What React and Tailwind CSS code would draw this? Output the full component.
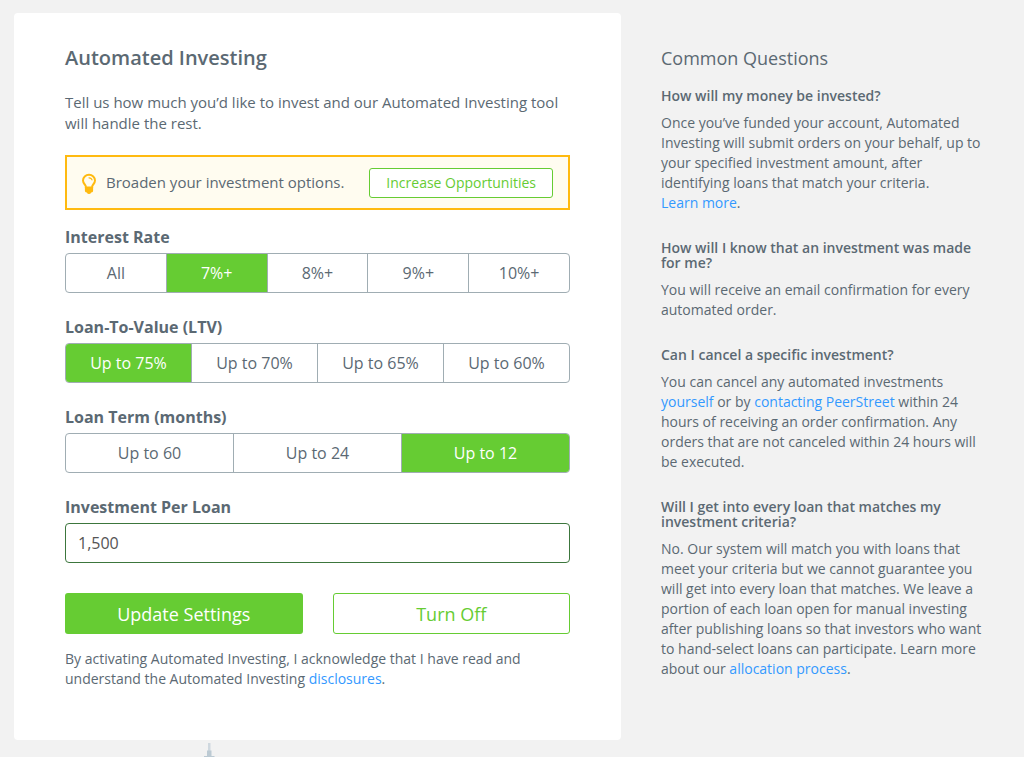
import { useState } from "react";

const CHOICES = [
  { name: "rate", label: "Interest Rate", options: ["All", "7%+", "8%+", "9%+", "10%+"], initial: "7%+" },
  { name: "ltv", label: "Loan-To-Value (LTV)", options: ["Up to 75%", "Up to 70%", "Up to 65%", "Up to 60%"], initial: "Up to 75%" },
  { name: "term", label: "Loan Term (months)", options: ["Up to 60", "Up to 24", "Up to 12"], initial: "Up to 12" },
];

function BulbIcon() {
  return (
    <svg className="h-[22px] w-4 shrink-0" viewBox="0 0 16 22" fill="none" aria-hidden="true">
      <path
        d="M4.800 15.500V14.400C4.800 12.800 2 11.800 2 8.600a6 5.800 0 0 1 12 0c0 3.200-2.800 4.200-2.800 5.800v1.100z"
        stroke="#ffba10"
        strokeWidth="2"
        strokeLinejoin="round"
      />
      <path d="M8 5.800c1.600 0 2.700.8 3 2.100" stroke="#ffba10" strokeWidth="1.200" strokeLinecap="round" />
      <path d="M3.900 15.200h8.200v3.600a1.600 1.600 0 0 1-1.600 1.600h-.4a2.200 2.200 0 0 1-4.200 0h-.4a1.600 1.600 0 0 1-1.600-1.600z" fill="#ffba10" />
    </svg>
  );
}

function SegmentedChoice({ name, label, options, initial }) {
  const [value, setValue] = useState(initial);
  return (
    <fieldset className="mb-6 min-w-0">
      <legend className="mb-1.5 text-base leading-5 font-bold">{label}</legend>
      <div className="flex h-10 divide-x divide-[#a0adb3] overflow-hidden rounded border border-[#a0adb3] bg-white">
        {options.map((option) => (
          <label
            key={option}
            className="relative flex flex-1 cursor-pointer items-center justify-center text-base has-checked:bg-[#66cc33] has-checked:text-white"
          >
            <input
              type="radio"
              name={name}
              value={option}
              checked={value === option}
              onChange={() => setValue(option)}
              className="sr-only"
            />
            {option}
          </label>
        ))}
      </div>
    </fieldset>
  );
}

function TextLink({ children }) {
  return (
    <a href="#" className="text-[#3399ff] hover:underline">
      {children}
    </a>
  );
}

function Question({ title, children }) {
  return (
    <section className="mb-[27px]">
      <h3 className="mb-2.5 text-sm leading-[15px] font-semibold">{title}</h3>
      <p className="text-sm leading-5">{children}</p>
    </section>
  );
}

export default function App() {
  return (
    <div className="grid min-h-screen grid-cols-[607fr_327fr] gap-10 bg-[#f2f2f2] pt-[13px] pr-9 pl-3.5 font-['Open_Sans',sans-serif] text-[#5b6973]">
      <div className="flex flex-col">
        <main className="rounded bg-white px-[51px] pt-[31px] pb-[51px]">
          <h1 className="text-xl leading-7 font-semibold">Automated Investing</h1>
          <p className="mt-5 text-[15px] leading-[21px]">
            Tell us how much you’d like to invest and our Automated Investing tool will handle the rest.
          </p>
          <div className="mt-[21px] mb-[17px] flex h-[55px] items-center border-2 border-[#ffba10] bg-[#fffcf0] pr-[15px] pl-3.5">
            <BulbIcon />
            <p className="ml-[9px] flex-1 text-[15px]">Broaden your investment options.</p>
            <button type="button" className="h-[30px] rounded-[3px] border border-[#66cc33] bg-white px-4 text-sm text-[#66cc33]">
              Increase Opportunities
            </button>
          </div>
          <form onSubmit={(e) => e.preventDefault()}>
            {CHOICES.map((choice) => (
              <SegmentedChoice key={choice.name} {...choice} />
            ))}
            <label htmlFor="per-loan" className="mb-1.5 block text-base leading-5 font-bold">
              Investment Per Loan
            </label>
            <input
              id="per-loan"
              type="text"
              inputMode="numeric"
              defaultValue="1,500"
              className="h-10 w-full rounded border border-[#3c763d] bg-white px-3 text-base text-[#555555] outline-none"
            />
            <div className="mt-[30px] grid grid-cols-2 gap-[30px]">
              <button type="submit" className="h-[41px] rounded-[3px] bg-[#66cc33] text-lg text-white">
                Update Settings
              </button>
              <button type="button" className="h-[41px] rounded-[3px] border border-[#66cc33] bg-white text-lg text-[#66cc33]">
                Turn Off
              </button>
            </div>
          </form>
          <p className="mt-[15px] text-sm leading-5">
            By activating Automated Investing, I acknowledge that I have read and understand the Automated Investing{" "}
            <TextLink>disclosures</TextLink>.
          </p>
        </main>
        <svg className="mt-[3px] ml-[189px] h-3.5 w-3" viewBox="0 0 12 14" aria-hidden="true">
          <rect x="5" y="0" width="2.500" height="8" fill="#cfd8df" />
          <rect x="4" y="7.500" width="4.500" height="6" fill="#bccad3" />
          <rect x="1" y="13" width="10.500" height="1" fill="#bccad3" />
        </svg>
      </div>
      <aside className="pt-8">
        <h2 className="mb-[17px] text-lg leading-[26px]">Common Questions</h2>
        <Question title="How will my money be invested?">
          Once you’ve funded your account, Automated Investing will submit orders on your behalf, up to your specified
          investment amount, after identifying loans that match your criteria.
          <br />
          <TextLink>Learn more</TextLink>.
        </Question>
        <Question title="How will I know that an investment was made for me?">
          You will receive an email confirmation for every automated order.
        </Question>
        <Question title="Can I cancel a specific investment?">
          You can cancel any automated investments <TextLink>yourself</TextLink> or by{" "}
          <TextLink>contacting PeerStreet</TextLink> within 24 hours of receiving an order confirmation. Any orders that
          are not canceled within 24 hours will be executed.
        </Question>
        <Question title="Will I get into every loan that matches my investment criteria?">
          No. Our system will match you with loans that meet your criteria but we cannot guarantee you will get into
          every loan that matches. We leave a portion of each loan open for manual investing after publishing loans so
          that investors who want to hand-select loans can participate. Learn more about our{" "}
          <TextLink>allocation process</TextLink>.
        </Question>
      </aside>
    </div>
  );
}
